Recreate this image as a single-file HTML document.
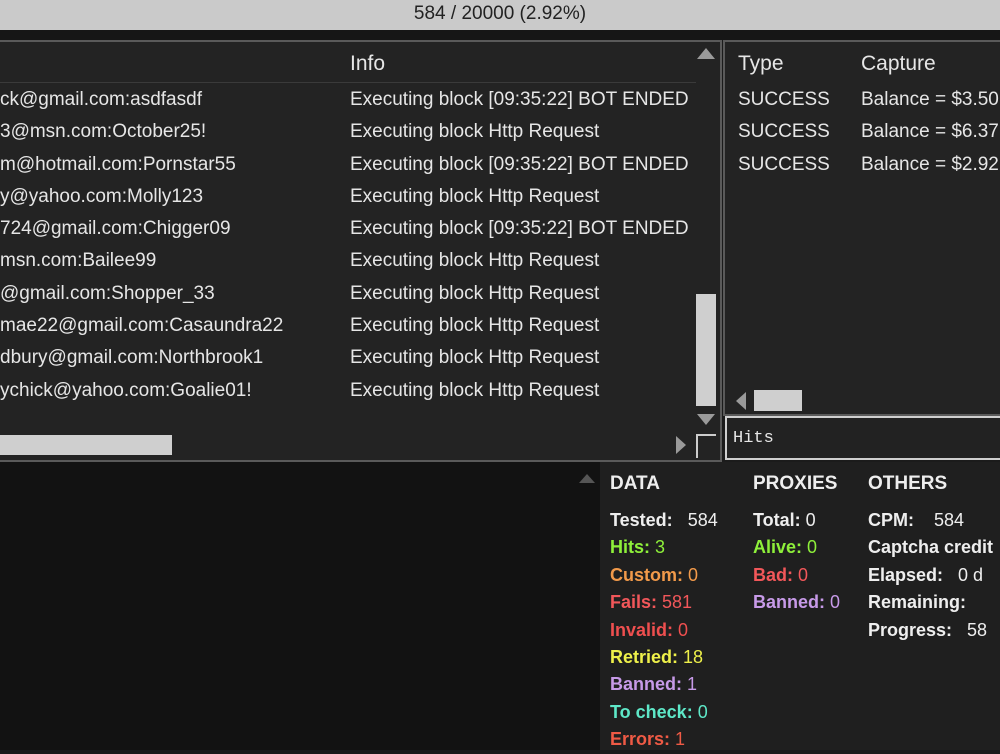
<!DOCTYPE html>
<html><head><style>
body{margin:0;width:1000px;height:750px;overflow:hidden;background:#1b1b1b;font-family:"Liberation Sans",sans-serif;position:relative}
div,span{position:absolute;white-space:nowrap}
.t{color:#e6e6e6;font-size:19px}
.s{font-size:18px;font-weight:bold}
.s i{font-style:normal;font-weight:normal}
</style></head><body>
<div style="left:0;top:0;width:1000px;height:30px;background:#cacaca"></div>
<div style="left:0;top:3px;width:1000px;text-align:center;font-size:19px;color:#222">584 / 20000 (2.92%)</div>
<div style="left:0;top:30px;width:1000px;height:10px;background:#161616"></div>
<div style="left:-2px;top:40px;width:720px;height:418px;border:2px solid #5a5a5a;background:#232323"></div>
<div style="left:0;top:82px;width:696px;height:1px;background:#3a3a3a"></div>
<div class="t" style="left:350px;top:52px;font-size:21px">Info</div>
<div style="left:697px;top:48px;width:0;height:0;border-left:9px solid transparent;border-right:9px solid transparent;border-bottom:11px solid #9a9a9a"></div>
<div style="left:696px;top:294px;width:20px;height:112px;background:#cfcfcf"></div>
<div style="left:697px;top:414px;width:0;height:0;border-left:9px solid transparent;border-right:9px solid transparent;border-top:11px solid #9a9a9a"></div>
<div style="left:0;top:435px;width:172px;height:20px;background:#cfcfcf"></div>
<div style="left:676px;top:436px;width:0;height:0;border-top:9px solid transparent;border-bottom:9px solid transparent;border-left:10px solid #9a9a9a"></div>
<div style="left:696px;top:434px;width:18px;height:22px;border-left:2px solid #ccc;border-top:2px solid #ccc"></div>
<div class="t" style="left:0;top:84px;line-height:32.3px">ck@gmail.com:asdfasdf<br>3@msn.com:October25!<br>m@hotmail.com:Pornstar55<br>y@yahoo.com:Molly123<br>724@gmail.com:Chigger09<br>msn.com:Bailee99<br>@gmail.com:Shopper_33<br>mae22@gmail.com:Casaundra22<br>dbury@gmail.com:Northbrook1<br>ychick@yahoo.com:Goalie01!</div>
<div class="t" style="left:350px;top:84px;line-height:32.3px;width:345px;overflow:hidden">Executing block [09:35:22] BOT ENDED<br>Executing block Http Request<br>Executing block [09:35:22] BOT ENDED<br>Executing block Http Request<br>Executing block [09:35:22] BOT ENDED<br>Executing block Http Request<br>Executing block Http Request<br>Executing block Http Request<br>Executing block Http Request<br>Executing block Http Request</div>
<div style="left:723px;top:40px;width:290px;height:372px;border:2px solid #5a5a5a;background:#232323"></div>
<div class="t" style="left:738px;top:52px;font-size:21px">Type</div>
<div class="t" style="left:861px;top:52px;font-size:21px">Capture</div>
<div class="t" style="left:738px;top:84px;line-height:32.3px">SUCCESS<br>SUCCESS<br>SUCCESS</div>
<div class="t" style="left:861px;top:84px;line-height:32.3px">Balance = $3.50<br>Balance = $6.37<br>Balance = $2.92</div>
<div style="left:736px;top:392px;width:0;height:0;border-top:9px solid transparent;border-bottom:9px solid transparent;border-right:10px solid #9a9a9a"></div>
<div style="left:754px;top:390px;width:48px;height:21px;background:#cfcfcf"></div>
<div style="left:725px;top:416px;width:290px;height:40px;border:2px solid #cfcfcf;background:#222"></div>
<div style="left:733px;top:429px;font-family:'Liberation Mono',monospace;font-size:17px;color:#e6e6e6">Hits</div>
<div style="left:0;top:462px;width:600px;height:288px;background:#121212"></div>
<div style="left:579px;top:474px;width:0;height:0;border-left:8px solid transparent;border-right:8px solid transparent;border-bottom:9px solid #555"></div>
<div style="left:600px;top:462px;width:400px;height:288px;background:#1f1f1f"></div>
<div class="s" style="left:610px;top:473px;color:#eee;font-size:19px">DATA</div>
<div class="s" style="left:753px;top:473px;color:#eee;font-size:19px">PROXIES</div>
<div class="s" style="left:868px;top:473px;color:#eee;font-size:19px">OTHERS</div>
<div class="s" style="left:610px;top:507px;line-height:27.4px">
<span style="position:static;color:#eee">Tested: &nbsp;&nbsp;<i>584</i></span><br>
<span style="position:static;color:#8ef03a">Hits: <i>3</i></span><br>
<span style="position:static;color:#f29a4a">Custom: <i>0</i></span><br>
<span style="position:static;color:#f2575a">Fails: <i>581</i></span><br>
<span style="position:static;color:#ef4f4f">Invalid: <i>0</i></span><br>
<span style="position:static;color:#eef04a">Retried: <i>18</i></span><br>
<span style="position:static;color:#c79ae8">Banned: <i>1</i></span><br>
<span style="position:static;color:#5ee8c8">To check: <i>0</i></span><br>
<span style="position:static;color:#ef5a45">Errors: <i>1</i></span></div>
<div class="s" style="left:753px;top:507px;line-height:27.4px">
<span style="position:static;color:#eee">Total: <i>0</i></span><br>
<span style="position:static;color:#8ef03a">Alive: <i>0</i></span><br>
<span style="position:static;color:#f2575a">Bad: <i>0</i></span><br>
<span style="position:static;color:#c79ae8">Banned: <i>0</i></span></div>
<div class="s" style="left:868px;top:507px;line-height:27.4px;color:#eee">
CPM: &nbsp;&nbsp;&nbsp;<i>584</i><br>Captcha credit<br>Elapsed: &nbsp;&nbsp;<i>0 d</i><br>Remaining:<br>Progress: &nbsp;&nbsp;<i>58</i></div>
</body></html>
